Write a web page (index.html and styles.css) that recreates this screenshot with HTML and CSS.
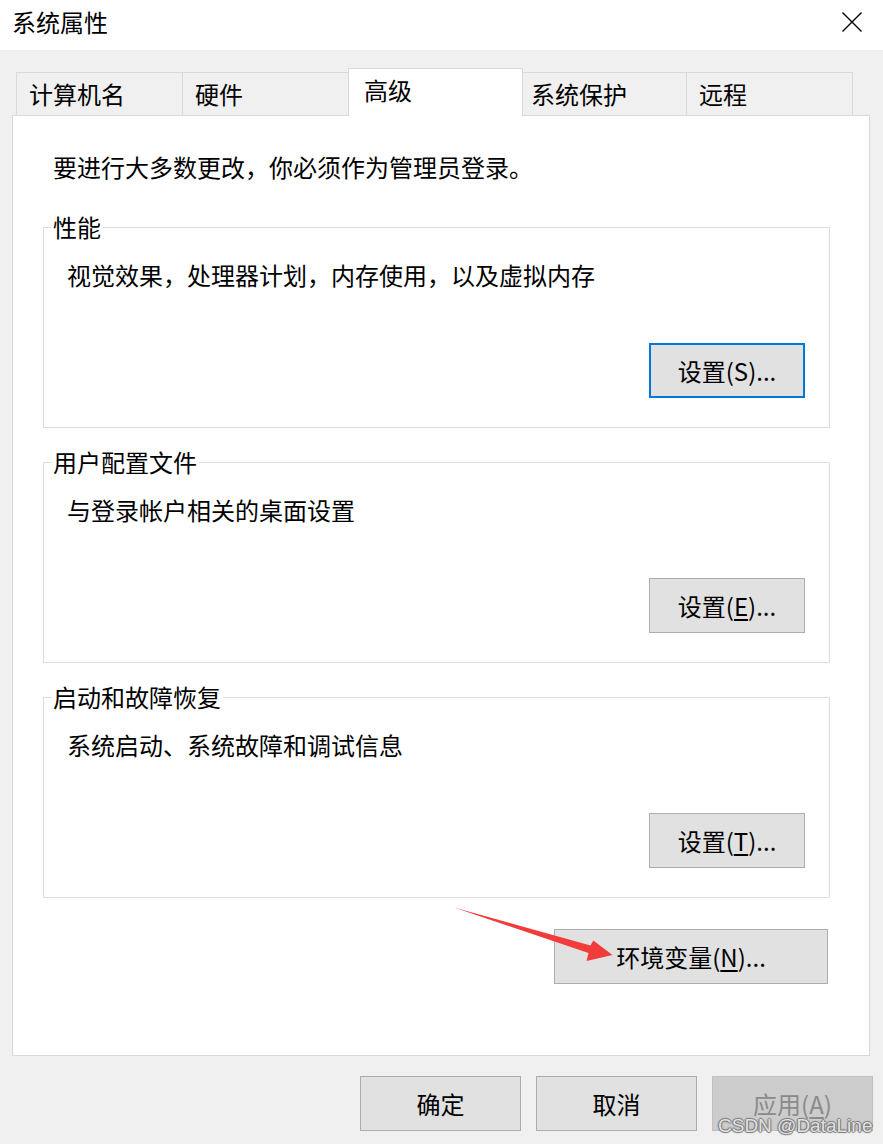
FILE: index.html
```html
<!DOCTYPE html>
<html lang="zh-CN">
<head>
  <meta charset="UTF-8">
  <title>系统属性</title>
  <link rel="stylesheet" href="styles.css">
</head>
<body>

  <div class="dialog">
    <div class="titlebar">
      <span class="title">系统属性</span>
      <svg class="close" width="20" height="20" viewBox="0 0 20 20">
        <path d="M0.5 0.5 L19.5 19.5 M19.5 0.5 L0.5 19.5" stroke="#000" stroke-width="1.4" fill="none"/>
      </svg>
    </div>

    <div class="content">
      <div class="tabs">
        <div class="tab">计算机名</div>
        <div class="tab">硬件</div>
        <div class="tab active">高级</div>
        <div class="tab tab-narrow">系统保护</div>
        <div class="tab">远程</div>
      </div>

      <div class="panel">
        <p class="intro">要进行大多数更改，你必须作为管理员登录。</p>

        <fieldset class="group">
          <legend>性能</legend>
          <div class="group-text">视觉效果，处理器计划，内存使用，以及虚拟内存</div>
          <button type="button" class="btn btn-settings focused">设置(S)...</button>
        </fieldset>

        <fieldset class="group">
          <legend>用户配置文件</legend>
          <div class="group-text">与登录帐户相关的桌面设置</div>
          <button type="button" class="btn btn-settings">设置(<u>E</u>)...</button>
        </fieldset>

        <fieldset class="group">
          <legend>启动和故障恢复</legend>
          <div class="group-text">系统启动、系统故障和调试信息</div>
          <button type="button" class="btn btn-settings">设置(<u>T</u>)...</button>
        </fieldset>

        <div class="env-row">
          <button type="button" class="btn btn-env">环境变量(<u>N</u>)...</button>
        </div>
      </div>

      <div class="actions">
        <button type="button" class="btn btn-action">确定</button>
        <button type="button" class="btn btn-action">取消</button>
        <button type="button" class="btn btn-action" disabled>应用(<u>A</u>)</button>
      </div>
    </div>

    <!-- annotation arrow pointing at the env button -->
    <svg class="arrow" width="170" height="65" viewBox="450 900 170 65">
      <polygon points="454,907.5 590.5,945.5 593.3,940.5 612.5,955 586.5,961 588.5,953" fill="#f23c3c"/>
    </svg>

    <div class="watermark">CSDN @DataLine</div>
  </div>

</body>
</html>
```

FILE: styles.css
```css
body {
  margin: 0;
  background-color: #f0f0f0;
  font-family: "Noto Sans CJK SC", "Noto Sans", sans-serif;
  font-size: 24px;
  color: #000;
}
.dialog {
  position: relative;
  width: 883px;
  height: 1144px;
  overflow: hidden;
}
.titlebar {
  height: 50px;
  background-color: #fff;
  display: flex;
  align-items: center;
  justify-content: space-between;
  padding: 0 21px 0 12px;
}
.title {
  line-height: 32px;
  margin-top: -6px;
}
.close {
  margin-top: -6px;
}
.content {
  padding: 18px 13px 0 12px;
}
.tabs {
  display: flex;
  align-items: flex-end;
  margin-left: 4px;
}
.tab {
  box-sizing: border-box;
  width: 167px;
  height: 43px;
  padding: 5px 0 0 12px;
  line-height: 32px;
  border: 1px solid #d9d9d9;
  border-bottom: none;
  margin-left: -1px;
  background-color: #f0f0f0;
}
.tab:first-child {
  margin-left: 0;
  width: 167px;
}
.tab.active {
  position: relative;
  z-index: 1;
  width: 175px;
  height: 48px;
  margin-bottom: -1px;
  padding-left: 15px;
  background-color: #fff;
}
.tab-narrow {
  width: 165px;
  padding-left: 8px;
}
.panel {
  background-color: #fff;
  border: 1px solid #d9d9d9;
  padding: 35px 39px 71px 30px;
}
.intro {
  margin: 0 0 28px 10px;
  line-height: 32px;
}
.group {
  margin: 0 0 18px 0;
  padding: 16px 24px 29px 23px;
  border: 1px solid #dcdcdc;
  display: flex;
  flex-direction: column;
  min-width: 0;
}
.group legend {
  margin-left: -16px;
  padding: 0 2px;
  line-height: 32px;
}
.group-text {
  line-height: 32px;
}
.btn {
  box-sizing: border-box;
  height: 55px;
  background-color: #e1e1e1;
  border: 1px solid #adadad;
  font-family: inherit;
  font-size: 24px;
  color: #000;
  padding: 0;
  cursor: pointer;
}
.btn u {
  text-underline-offset: 3px;
}
.btn-settings {
  width: 156px;
  align-self: flex-end;
  margin-top: 52px;
}
.btn.focused {
  border: 2px solid #0078d7;
}
.env-row {
  display: flex;
  justify-content: flex-end;
  margin-top: 31px;
  padding-right: 2px;
}
.btn-env {
  width: 274px;
}
.actions {
  display: flex;
  justify-content: flex-end;
  gap: 15px;
  padding-top: 20px;
  margin-right: -3px;
}
.btn-action {
  width: 161px;
}
.btn-action:disabled {
  background-color: #cccccc;
  border-color: #bfbfbf;
  color: #8a8a8a;
  cursor: default;
}
.arrow {
  position: absolute;
  left: 450px;
  top: 900px;
  pointer-events: none;
}
.watermark {
  position: absolute;
  left: 718px;
  top: 1114px;
  font-family: "Liberation Sans", Arial, sans-serif;
  font-size: 19px;
  line-height: 24px;
  color: rgba(240, 240, 240, 0.9);
  text-shadow: 1px 0 1px #777, -1px 0 1px #777, 0 1px 1px #777, 0 -1px 1px #777;
  pointer-events: none;
}
```
